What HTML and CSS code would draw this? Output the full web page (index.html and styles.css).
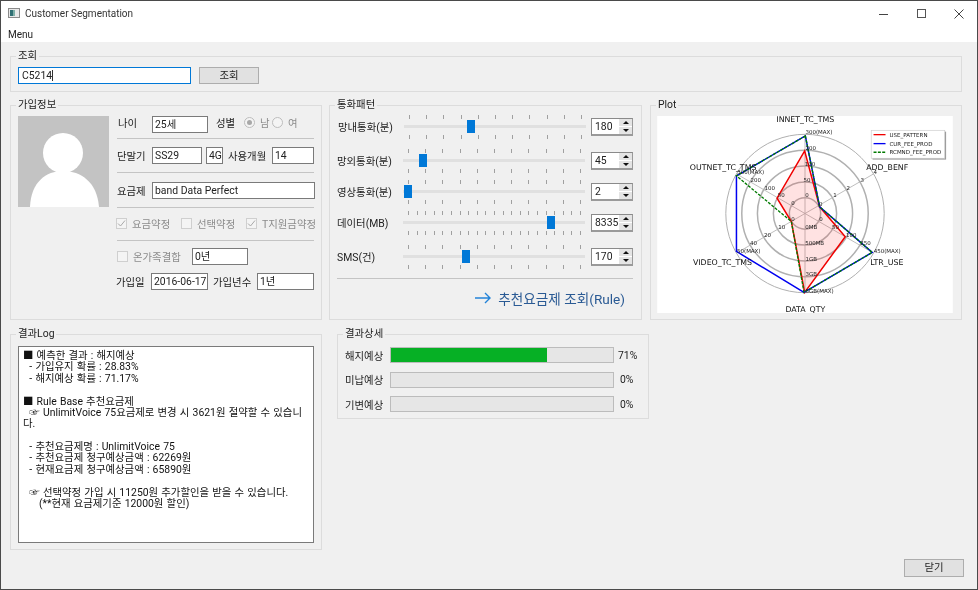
FILE: index.html
```html
<!DOCTYPE html>
<html lang="ko">
<head>
<meta charset="utf-8">
<title>Customer Segmentation</title>
<link rel="stylesheet" href="styles.css">
</head>
<body>
<div class="window">
  <header class="titlebar">
    <svg class="app-icon" width="12" height="10" viewBox="0 0 12 10"><rect x="0.5" y="0.5" width="11" height="9" fill="#e8e8e8" stroke="#8a8a8a"/><rect x="2" y="2" width="3" height="6" fill="#2f6f73"/><rect x="5" y="2" width="2" height="6" fill="#7fb0a8"/></svg>
    <span class="title-text">Customer Segmentation</span>
    <svg class="win-controls" width="90" height="12" viewBox="0 0 90 12">
      <path d="M0 6.5H9" stroke="#444" fill="none"/>
      <rect x="38.5" y="1.5" width="8" height="8" stroke="#555" fill="none"/>
      <path d="M75.5 1.5L84.5 10.5M84.5 1.5L75.5 10.5" stroke="#444" fill="none"/>
    </svg>
  </header>
  <nav class="menubar">Menu</nav>
  <main class="content">
    <section class="group group-search">
      <span class="group-title">조회</span>
      <div class="search-row">
        <div class="field field-search">C5214<span class="caret"></span></div>
        <div class="button button-search">조회</div>
      </div>
    </section>

    <div class="top-row">
      <section class="group group-info">
        <span class="group-title">가입정보</span>
        <svg class="photo" width="91" height="91" viewBox="0 0 91 91">
          <rect width="91" height="91" fill="#c3c3c3"/>
          <circle cx="45" cy="37" r="20" fill="#fff"/>
          <path d="M12 91C13 66 28 55 45 55C63 55 79 66 81 91Z" fill="#fff"/>
        </svg>
        <div class="form">
          <div class="row row-top">
            <span class="lbl w-34 ml-2">나이</span>
            <div class="field w-56">25세</div>
            <span class="lbl ml-8 w-28">성별</span>
            <span class="radio radio-on"></span>
            <span class="lbl dim ml-5 w-12">남</span>
            <span class="radio"></span>
            <span class="lbl dim ml-5">여</span>
          </div>
          <div class="sep sep-1"></div>
          <div class="row">
            <span class="lbl w-35 ml-1">단말기</span>
            <div class="field w-50">SS29</div>
            <div class="field w-17 ml-4">4G</div>
            <span class="lbl w-44 ml-5">사용개월</span>
            <div class="field w-42">14</div>
          </div>
          <div class="sep sep-2"></div>
          <div class="row">
            <span class="lbl w-35 ml-1">요금제</span>
            <div class="field w-163">band Data Perfect</div>
          </div>
          <div class="sep sep-3"></div>
          <div class="row row-check">
            <span class="check check-on"><svg width="9" height="9" viewBox="0 0 9 9"><path d="M1 4.5L3.5 7L8 1.5" stroke="#a8a8a8" fill="none"/></svg></span>
            <span class="lbl dim ml-5 w-49">요금약정</span>
            <span class="check"></span>
            <span class="lbl dim ml-5 w-49">선택약정</span>
            <span class="check check-on"><svg width="9" height="9" viewBox="0 0 9 9"><path d="M1 4.5L3.5 7L8 1.5" stroke="#a8a8a8" fill="none"/></svg></span>
            <span class="lbl dim ml-5">T지원금약정</span>
          </div>
          <div class="sep sep-4"></div>
          <div class="row">
            <span class="check ml-1"></span>
            <span class="lbl dim ml-5 w-59">온가족결합</span>
            <div class="field w-56">0년</div>
          </div>
          <div class="row row-last">
            <span class="lbl w-35">가입일</span>
            <div class="field w-57">2016-06-17</div>
            <span class="lbl ml-5 w-44">가입년수</span>
            <div class="field w-57">1년</div>
          </div>
        </div>
      </section>

      <section class="group group-pattern">
        <span class="group-title">통화패턴</span>
        <div class="slider-row slider-row-first">
          <span class="lbl slider-label">망내통화(분)</span>
          <div class="slider">
            <div class="ticks"><i></i><i></i><i></i><i></i><i></i><i></i><i></i><i></i><i></i><i></i><i></i></div>
            <div class="track"></div>
            <div class="ticks"><i></i><i></i><i></i><i></i><i></i><i></i><i></i><i></i><i></i><i></i><i></i></div>
            <span class="thumb" style="left:63px"></span>
          </div>
          <div class="spin"><span class="spin-val">180</span><span class="spin-btns"><b class="up"></b><b class="down"></b></span></div>
        </div>
        <div class="slider-row mt-10">
          <span class="lbl slider-label">망외통화(분)</span>
          <div class="slider">
            <div class="ticks"><i></i><i></i><i></i><i></i><i></i><i></i><i></i><i></i><i></i><i></i><i></i></div>
            <div class="track"></div>
            <div class="ticks"><i></i><i></i><i></i><i></i><i></i><i></i><i></i><i></i><i></i><i></i><i></i></div>
            <span class="thumb" style="left:16px"></span>
          </div>
          <div class="spin"><span class="spin-val">45</span><span class="spin-btns"><b class="up"></b><b class="down"></b></span></div>
        </div>
        <div class="slider-row mt-7">
          <span class="lbl slider-label">영상통화(분)</span>
          <div class="slider">
            <div class="ticks"><i></i><i></i><i></i><i></i><i></i><i></i><i></i><i></i><i></i><i></i><i></i></div>
            <div class="track"></div>
            <div class="ticks"><i></i><i></i><i></i><i></i><i></i><i></i><i></i><i></i><i></i><i></i><i></i></div>
            <span class="thumb" style="left:1px"></span>
          </div>
          <div class="spin"><span class="spin-val">2</span><span class="spin-btns"><b class="up"></b><b class="down"></b></span></div>
        </div>
        <div class="slider-row mt-7">
          <span class="lbl slider-label">데이터(MB)</span>
          <div class="slider">
            <div class="ticks"><i></i><i></i><i></i><i></i><i></i><i></i><i></i><i></i><i></i><i></i><i></i><i></i><i></i><i></i><i></i><i></i><i></i><i></i><i></i><i></i><i></i></div>
            <div class="track"></div>
            <div class="ticks"><i></i><i></i><i></i><i></i><i></i><i></i><i></i><i></i><i></i><i></i><i></i><i></i><i></i><i></i><i></i><i></i><i></i><i></i><i></i><i></i><i></i></div>
            <span class="thumb" style="left:144px"></span>
          </div>
          <div class="spin"><span class="spin-val">8335</span><span class="spin-btns"><b class="up"></b><b class="down"></b></span></div>
        </div>
        <div class="slider-row mt-10">
          <span class="lbl slider-label">SMS(건)</span>
          <div class="slider">
            <div class="ticks"><i></i><i></i><i></i><i></i><i></i><i></i><i></i><i></i><i></i><i></i><i></i></div>
            <div class="track"></div>
            <div class="ticks"><i></i><i></i><i></i><i></i><i></i><i></i><i></i><i></i><i></i><i></i><i></i></div>
            <span class="thumb" style="left:59px"></span>
          </div>
          <div class="spin"><span class="spin-val">170</span><span class="spin-btns"><b class="up"></b><b class="down"></b></span></div>
        </div>
        <div class="sep sep-pattern"></div>
        <div class="rule-link">
          <svg width="16" height="12" viewBox="0 0 16 12"><path d="M0 6H15M10 1L15 6L10 11" stroke="#2383d8" stroke-width="1.4" fill="none"/></svg>
          <span>추천요금제 조회(Rule)</span>
        </div>
      </section>

      <section class="group group-plot">
        <span class="group-title">Plot</span>
        <svg class="radar" width="296" height="197" viewBox="22 65 888 592">
          <rect x="22" y="65" width="888" height="592" fill="#fff"/>
          <g class="grid-axes">
            <path d="M466 358L466 120M466 358L672 239M466 358L672 477M466 358L466 596M466 358L260 477M466 358L260 239"/>
          </g>
          <g class="grid-rings">
            <circle cx="466" cy="358" r="47"/>
            <circle cx="466" cy="358" r="95"/>
            <circle cx="466" cy="358" r="143"/>
            <circle cx="466" cy="358" r="190"/>
            <circle class="ring-outer" cx="466" cy="358" r="238"/>
          </g>
          <polygon class="poly-use" points="465,170 510,338 587,428 465,595 425,382 382,312"/>
          <polygon class="poly-cur" points="467,125 510,338 668,475 463,595 260,472 260,245"/>
          <polygon class="poly-rec" points="467,125 510,338 668,475 463,595 425,382 260,245"/>
          <g class="tick-labels">
            <text x="472" y="308">0</text><text x="472" y="263">50</text><text x="481" y="216">100</text><text x="483" y="166">200</text><text x="508" y="120">300(MAX)</text>
            <text x="430" y="333">0</text><text x="395" y="309">50</text><text x="360" y="288">100</text><text x="318" y="263">200</text><text x="303" y="238">300(MAX)</text>
            <text x="513" y="334">0</text><text x="556" y="309">1</text><text x="596" y="288">2</text><text x="638" y="263">3</text><text x="677" y="238">4</text>
            <text x="514" y="381">0</text><text x="558" y="404">50</text><text x="605" y="428">100</text><text x="648" y="452">250</text><text x="713" y="478">450(MAX)</text>
            <text x="485" y="406">0MB</text><text x="495" y="453">500MB</text><text x="485" y="500">1GB</text><text x="485" y="547">3GB</text><text x="510" y="596">5GB(MAX)</text>
            <text x="430" y="381">0</text><text x="396" y="404">10</text><text x="353" y="428">20</text><text x="311" y="452">40</text><text x="297" y="477">50(MAX)</text>
          </g>
          <g class="axis-labels">
            <text x="467" y="84">INNET_TC_TMS</text>
            <text x="713" y="227">ADD_BENF</text>
            <text x="712" y="512">LTR_USE</text>
            <text x="467" y="654">DATA_QTY</text>
            <text x="218" y="512">VIDEO_TC_TMS</text>
            <text x="220" y="226">OUTNET_TC_TMS</text>
          </g>
          <g class="legend-box">
            <rect class="legend-shadow" x="669" y="112" width="221" height="84"/>
            <rect class="legend-frame" x="665" y="108" width="221" height="84"/>
            <path class="leg-use" d="M672 121H708"/>
            <path class="leg-cur" d="M672 148H708"/>
            <path class="leg-rec" d="M672 174H708"/>
            <text x="720" y="127">USE_PATTERN</text>
            <text x="720" y="154">CUR_FEE_PROD</text>
            <text x="720" y="180">RCMND_FEE_PROD</text>
          </g>
        </svg>
      </section>
    </div>

    <div class="bottom-row">
      <section class="group group-log">
        <span class="group-title">결과Log</span>
        <div class="log-box">■ 예측한 결과 : 해지예상
  - 가입유지 확률 : 28.83%
  - 해지예상 확률 : 71.17%

■ Rule Base 추천요금제
  ☞ UnlimitVoice 75요금제로 변경 시 3621원 절약할 수 있습니
다.

  - 추천요금제명 : UnlimitVoice 75
  - 추천요금제 청구예상금액 : 62269원
  - 현재요금제 청구예상금액 : 65890원

  ☞ 선택약정 가입 시 11250원 추가할인을 받을 수 있습니다.
     (**현재 요금제기준 12000원 할인)</div>
      </section>
      <section class="group group-detail">
        <span class="group-title">결과상세</span>
        <div class="result-row">
          <span class="lbl result-label">해지예상</span>
          <div class="bar"><div class="bar-fill" style="width:70.3%"></div></div>
          <span class="lbl result-pct">71%</span>
        </div>
        <div class="result-row">
          <span class="lbl result-label">미납예상</span>
          <div class="bar"></div>
          <span class="lbl result-pct result-pct-zero">0%</span>
        </div>
        <div class="result-row">
          <span class="lbl result-label">기변예상</span>
          <div class="bar"></div>
          <span class="lbl result-pct result-pct-zero">0%</span>
        </div>
      </section>
    </div>

    <footer class="footer">
      <div class="button button-close">닫기</div>
    </footer>
  </main>
</div>
</body>
</html>
```

FILE: styles.css
```css
* { box-sizing: border-box; }
html, body { margin: 0; padding: 0; }
body {
  width: 978px;
  height: 590px;
  overflow: hidden;
  background: #f0f0f0;
  font-family: Roboto, "Noto Sans CJK KR", sans-serif;
  font-size: 10.4px;
  color: #222;
}
.window {
  width: 978px;
  height: 590px;
  border: 1px solid #4a4a4a;
  background: #f0f0f0;
  display: flex;
  flex-direction: column;
  filter: blur(0.4px);
}
.titlebar {
  height: 25px;
  background: #fff;
  display: flex;
  align-items: center;
  padding: 0 0 1px 7px;
  flex: none;
}
.app-icon { flex: none; }
.title-text { margin-left: 5px; color: #333; font-size: 10px; }
.win-controls { margin-left: auto; margin-right: 8px; margin-top: 1px; }
.menubar {
  height: 16px;
  line-height: 17px;
  background: #fff;
  padding-left: 7px;
  font-size: 10px;
  flex: none;
}
.content {
  flex: 1;
  padding: 14px 0 0 9px;
  display: flex;
  flex-direction: column;
}
.group {
  position: relative;
  border: 1px solid #dcdcdc;
  flex: none;
}
.group-title {
  position: absolute;
  left: 5px;
  top: -8px;
  padding: 0 2px;
  line-height: 14px;
  background: #f0f0f0;
}
.group-search { width: 952px; height: 36px; padding: 10px 0 0 7px; }
.search-row { display: flex; gap: 8px; }
.field {
  height: 17px;
  line-height: 15px;
  border: 1px solid #7a7a7a;
  background: #fff;
  padding-left: 2px;
  white-space: nowrap;
  overflow: hidden;
  flex: none;
}
.field-search { width: 173px; border-color: #0078d7; padding-left: 3px; }
.caret { display: inline-block; width: 1px; height: 11px; background: #333; vertical-align: -2px; }
.button {
  background: #e1e1e1;
  border: 1px solid #adadad;
  text-align: center;
  line-height: 15px;
}
.button-search { width: 60px; height: 17px; }
.top-row { display: flex; margin-top: 13px; height: 215px; flex: none; }
.group-info { width: 312px; margin-right: 7px; padding: 10px 0 0 7px; display: flex; }
.photo { flex: none; display: block; }
.form { margin-left: 7px; width: 198px; display: flex; flex-direction: column; }
.row { display: flex; align-items: center; height: 17px; flex: none; }
.row-top .lbl, .row-top .radio { margin-bottom: 4px; }
.row-check { height: 16px; }
.row-last { margin-top: 8px; }
.lbl { white-space: nowrap; flex: none; }
.dim { color: #8c8c8c; }
.sep { height: 1px; background: #c4c4c4; flex: none; }
.sep-1 { margin: 5px 0 8px 1px; }
.sep-2 { margin: 8px 0 9px 1px; }
.sep-3 { margin: 8px 0 7px 1px; }
.sep-4 { margin: 9px 0 7px 1px; }
.ml-1 { margin-left: 1px; }
.ml-2 { margin-left: 2px; }
.ml-4 { margin-left: 4px; }
.ml-5 { margin-left: 5px; }
.ml-8 { margin-left: 8px; }
.w-12 { width: 12px; }
.w-17 { width: 17px; }
.w-28 { width: 28px; }
.w-34 { width: 34px; }
.w-35 { width: 35px; }
.w-42 { width: 42px; }
.w-44 { width: 44px; }
.w-49 { width: 49px; }
.w-50 { width: 50px; }
.w-56 { width: 56px; }
.w-57 { width: 57px; }
.w-59 { width: 59px; }
.w-163 { width: 163px; }
.radio {
  width: 11px;
  height: 11px;
  border: 1px solid #bdbdbd;
  border-radius: 50%;
  background: #f4f4f4;
  display: flex;
  align-items: center;
  justify-content: center;
  flex: none;
}
.radio-on::after {
  content: "";
  width: 5px;
  height: 5px;
  border-radius: 50%;
  background: #a8a8a8;
}
.check {
  width: 11px;
  height: 11px;
  border: 1px solid #cfcfcf;
  background: #f4f4f4;
  display: flex;
  align-items: center;
  justify-content: center;
  flex: none;
}
.group-pattern { width: 313px; margin-right: 8px; padding: 9px 8px 0 7px; }
.slider-row { display: flex; height: 24px; align-items: center; }
.slider-row-first { margin-left: 1px; }
.mt-7 { margin-top: 7px; }
.mt-10 { margin-top: 10px; }
.slider-label { width: 66px; padding-bottom: 1px; }
.slider {
  position: relative;
  width: 182px;
  height: 24px;
  display: flex;
  flex-direction: column;
  justify-content: space-between;
  flex: none;
}
.ticks { display: flex; justify-content: space-between; padding: 0 4px 0 5px; height: 4px; }
.ticks i { display: block; width: 1px; height: 4px; background: #a0a0a0; }
.track {
  position: absolute;
  left: 0;
  right: 0;
  top: 10px;
  height: 3px;
  background: #e0e0e0;
}
.thumb {
  position: absolute;
  top: 5px;
  width: 8px;
  height: 13px;
  background: #0078d7;
}
.spin {
  margin-left: auto;
  width: 42px;
  height: 18px;
  border: 1px solid #8a8a8a;
  border-right-color: #9a9a9a;
  border-bottom: 2px solid #9a9a9a;
  background: #fff;
  display: flex;
  align-items: center;
  justify-content: space-between;
  flex: none;
}
.spin-val { padding-left: 3px; line-height: 15px; }
.spin-btns { width: 13px; height: 15px; display: flex; flex-direction: column; gap: 1px; }
.spin-btns b {
  flex: 1;
  background: #e4e4e4;
  display: flex;
  align-items: center;
  justify-content: center;
}
.spin-btns b::before {
  content: "";
  border-left: 3px solid transparent;
  border-right: 3px solid transparent;
}
.spin-btns .up::before { border-bottom: 3px solid #111; }
.spin-btns .down::before { border-top: 3px solid #111; }
.sep-pattern { margin-top: 9px; }
.rule-link {
  display: flex;
  align-items: center;
  justify-content: flex-end;
  gap: 7px;
  padding-right: 8px;
  margin-top: 9px;
  height: 20px;
  font-size: 13.6px;
  color: #2a5a94;
}
.group-plot { width: 312px; padding: 10px 0 0 6px; }
.radar { display: block; }
.radar text { font-family: "DejaVu Sans", sans-serif; }
.grid-axes path { stroke: #b0b0b0; stroke-width: 2.5; fill: none; }
.grid-rings circle { fill: none; stroke: #b0b0b0; stroke-width: 4.5; }
.grid-rings .ring-outer { stroke-width: 3; }
.poly-use { fill: rgba(255, 60, 60, 0.15); stroke: #f00000; stroke-width: 4.5; }
.poly-cur { fill: none; stroke: #0000f0; stroke-width: 4.5; }
.poly-rec { fill: none; stroke: #007a00; stroke-width: 4; stroke-dasharray: 9 4; }
.tick-labels text { font-size: 16.5px; fill: #222; text-anchor: middle; }
.axis-labels text { font-size: 23.6px; fill: #111; text-anchor: middle; }
.legend-shadow { fill: #999; }
.legend-frame { fill: #fff; stroke: #ccc; stroke-width: 2; }
.legend-box path { fill: none; stroke-width: 4; }
.leg-use { stroke: #f00000; }
.leg-cur { stroke: #0000f0; }
.leg-rec { stroke: #007a00; stroke-dasharray: 9 4; }
.legend-box text { font-size: 16.5px; fill: #222; }
.bottom-row { display: flex; margin-top: 14px; height: 216px; flex: none; align-items: flex-start; }
.group-log { width: 312px; height: 216px; margin-right: 15px; padding: 11px 0 0 7px; }
.log-box {
  width: 296px;
  height: 197px;
  border: 1px solid #7a7a7a;
  background: #fff;
  padding: 3px 0 0 4px;
  font-size: 10.4px;
  line-height: 11.38px;
  white-space: pre-wrap;
  word-spacing: 0.6px;
  color: #111;
}
.group-detail { width: 312px; height: 85px; padding: 12px 0 0 7px; display: flex; flex-direction: column; gap: 8.5px; }
.result-row { display: flex; align-items: center; height: 16px; }
.result-label { width: 45px; }
.bar {
  width: 224px;
  height: 16px;
  background: #e6e6e6;
  border: 1px solid #bcbcbc;
  flex: none;
}
.bar-fill { height: 100%; background: #06b025; }
.result-pct { margin-left: 4px; }
.result-pct-zero { margin-left: 6px; }
.footer { display: flex; justify-content: flex-end; padding: 9px 13px 0 0; }
.button-close { width: 60px; height: 18px; line-height: 16px; }
```
